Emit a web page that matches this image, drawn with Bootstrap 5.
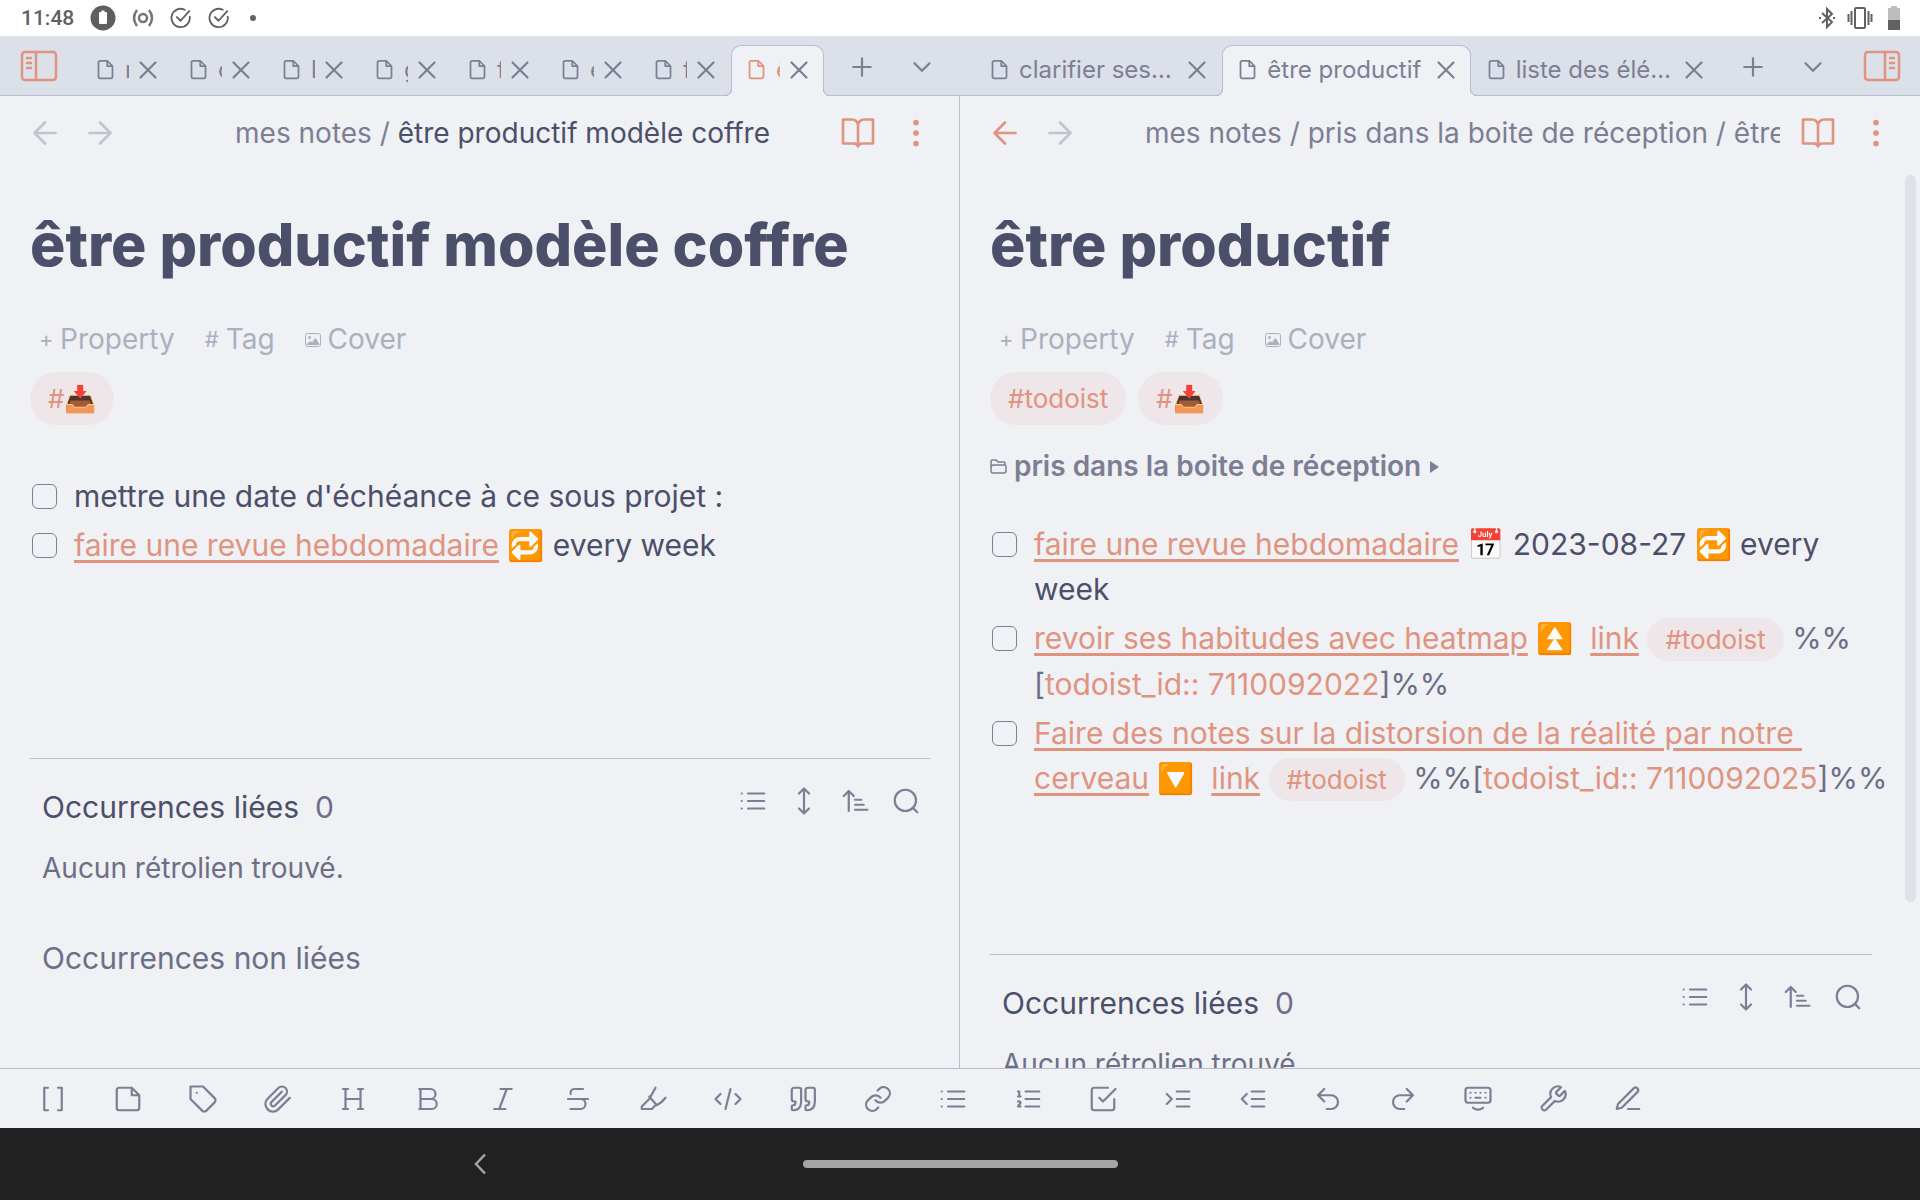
<!DOCTYPE html>
<html lang="fr">
<head>
<meta charset="utf-8">
<meta name="viewport" content="width=device-width, initial-scale=1">
<title>être productif modèle coffre</title>
<link href="https://cdn.jsdelivr.net/npm/bootstrap@5.3.0/dist/css/bootstrap.min.css" rel="stylesheet">
<style>
:root{--base:#eff1f5;--mantle:#dce0e8;--ink:#4c4f69;--muted:#6c6f85;--faint:#7c7f93;--pale:#acb0be;--line:#b9bdd0;--accent:#e09480;--pill:#eee6e8}
body{font-family:Inter,"Noto Sans",sans-serif;background:var(--base);color:var(--ink);font-size:30px;line-height:45px}
svg{display:block;flex:none}
.ico{fill:none;stroke:currentColor;stroke-width:1.75;stroke-linecap:round;stroke-linejoin:round;width:30px;height:30px}
.ico-sm{width:21px;height:21px;stroke-width:2}
.ico-lg{width:36px;height:36px}
.ico-side{width:38px;height:32px;stroke-width:2.5}
.ico-check{width:22px;height:24px;stroke-width:2}
.plain{border:0;background:none;padding:0;color:inherit;display:flex;align-items:center;justify-content:center;flex:none}
.status{height:36px;background:#fff;color:#616161;font:500 21px/36px Roboto,sans-serif;padding:0 20px 0 21px}
.status-left{gap:16px}
.status-right{gap:11px}
.tabbar{height:60px;background:var(--mantle);border-bottom:1px solid var(--line);color:var(--faint)}
.side-btn{width:78px;color:var(--accent);height:36px;margin-right:2px}
.side-btn.end{width:77px;margin-right:0}
.tab-group{min-width:0;flex:0 0 50%}
.tab-group+.tab-group{padding-left:14px}
.strip{min-width:0;flex:1 1 0}
.note-tab{height:51px;padding:0 10px 2px 15px;flex:1 1 0;min-width:0;font-size:24px;margin-bottom:-1px;position:relative}
.note-tab .tab-link{color:inherit;text-decoration:none;gap:9px;min-width:0;flex:1 1 0}
.note-tab .tab-name{overflow:hidden;white-space:nowrap;text-overflow:ellipsis;line-height:36px;min-width:0}
.strip.clip .tab-name{text-overflow:clip}
.note-tab .plain{margin-left:4px;color:var(--faint)}
.note-tab.on{background:var(--base);border:1px solid var(--line);border-bottom:0;border-radius:10px 10px 0 0;padding:0 9px 3px 14px;z-index:1}
.note-tab.on::before,.note-tab.on::after{content:"";position:absolute;bottom:0;width:7px;height:7px;border:1px solid var(--line);border-top:0}
.note-tab.on::before{left:-7px;border-left:0;border-bottom-right-radius:7px;box-shadow:3px 3px 0 var(--base);clip-path:inset(0 -1px 0 0)}
.note-tab.on::after{right:-7px;border-right:0;border-bottom-left-radius:7px;box-shadow:-3px 3px 0 var(--base);clip-path:inset(0 0 0 -1px)}
.note-tab .tab-link.hot,.hot{color:var(--accent)}
.bar-btn{width:60px;height:59px;padding-top:3px}
.pane{min-width:0;flex:1 1 0}
.pane+.pane{border-left:1px solid var(--line);margin-left:-1px}
.view-head{height:74px;padding:0 17px 0 17px;font-size:28px}
.view-head .nav-btn{width:55px;height:60px;color:#c1c3d0}
.view-head .nav-btn.live,.view-head .act{color:var(--accent)}
.view-head .act{width:60px;height:60px}
.view-head .act.last{width:55px}
.crumbs{margin:0 8px 0 58px;overflow:hidden;white-space:nowrap;color:var(--faint)}
.crumbs a{color:inherit;text-decoration:none}
.crumbs .here{color:var(--ink)}
.note{padding:39px 30px 0;overflow:hidden}
.with-bar .note{padding-right:48px}
.note h1{font-size:59px;font-weight:800;line-height:72px;margin:0 0 36px}
.meta-row{color:var(--pale);font-size:28px;padding-left:9px;gap:30px}
.meta-row .plain{gap:7px}
.meta-row .sign{font-size:22px;width:14px}
.tag-row{margin-top:10px;gap:12px}
.tag{color:var(--accent);background:var(--pill);text-decoration:none;font-size:26px;border-radius:27px;padding:4px 18px}
.tag-in{padding:6px 18px;border-radius:22px}
.folder{font-size:28px;font-weight:600;color:var(--faint);margin-top:19px;gap:7px}
.tasks{margin-top:47px;margin-bottom:188px}
.with-bar .tasks{margin-top:31px;margin-right:-20px;margin-bottom:150px}
.task{padding:2px 0;gap:17px}
.task input{appearance:none;width:25px;height:25px;border:1px solid var(--faint);border-radius:6px;margin:10px 0 0 2px;flex:none}
.task label{white-space:break-spaces}
.task label a:not(.tag){color:var(--accent);text-decoration:underline;text-decoration-thickness:3px;text-underline-offset:4px}
.dim{color:var(--muted)}
.refs{border-top:1px solid var(--line);padding:26px 9px 0 12px}
.refs h2,.refs h3{font-size:30px;font-weight:400;line-height:45px;margin:0}
.refs .tools{gap:21px;color:var(--faint);margin-top:-14px}
.refs p{font-size:28px;margin:16px 0 45px}
.thumb{position:absolute;right:4px;top:79px;width:11px;height:727px;border-radius:6px;background:#dfe0ea}
.dock{height:60px;border-top:1px solid var(--line);color:var(--faint);padding:0 15px}
.dock .plain{width:75px}
.sysnav{height:72px;background:#212121;color:#a4a4a4}
.home{width:315px;height:8px;border-radius:4px;background:#a4a4a4}
.back{width:60px;height:60px;left:450px;top:6px;position:absolute}
</style>
</head>
<body class="vh-100 d-flex flex-column overflow-hidden">
<svg width="0" height="0" class="position-absolute" aria-hidden="true">
<symbol id="file" viewBox="0 0 24 24"><path d="M14 2H6a2 2 0 0 0-2 2v16a2 2 0 0 0 2 2h12a2 2 0 0 0 2-2V8zM14 2v6h6"/></symbol>
<symbol id="x" viewBox="0 0 24 24"><path d="M6 6l12 12M18 6L6 18"/></symbol>
<symbol id="plus" viewBox="0 0 24 24"><path d="M12 5v14M5 12h14"/></symbol>
<symbol id="down" viewBox="0 0 24 24"><path d="M6 9l6 6 6-6"/></symbol>
<symbol id="left" viewBox="0 0 24 24"><path d="M19 12H5M12 19l-7-7 7-7"/></symbol>
<symbol id="right" viewBox="0 0 24 24"><path d="M5 12h14M12 5l7 7-7 7"/></symbol>
<symbol id="book" viewBox="0 0 24 24"><path d="M2 3h6a4 4 0 0 1 4 4v14a3 3 0 0 0-3-2H2zM22 3h-6a4 4 0 0 0-4 4v14a3 3 0 0 1 3-2h7z"/></symbol>
<symbol id="dots" viewBox="0 0 24 24"><g fill="currentColor"><circle cx="12" cy="5" r="1"/><circle cx="12" cy="12" r="1"/><circle cx="12" cy="19" r="1"/></g></symbol>
<symbol id="list" viewBox="0 0 24 24"><path d="M8 6h13M8 12h13M8 18h13M3 6h.01M3 12h.01M3 18h.01"/></symbol>
<symbol id="updown" viewBox="0 0 24 24"><path d="M12 2v20M8 6l4-4 4 4M8 18l4 4 4-4"/></symbol>
<symbol id="sort" viewBox="0 0 24 24"><path d="M3 8l4-4 4 4M7 4v16M12 11h5M12 15h7M12 19h10"/></symbol>
<symbol id="search" viewBox="0 0 24 24"><circle cx="11.5" cy="11.5" r="8.5"/><path d="M21 21l-3.5-3.5"/></symbol>
<symbol id="side-left" viewBox="0 0 38 32"><rect x="2" y="2" width="34" height="28" rx="3"/><path d="M16 2v28M7 8h4M7 13h4M7 18h4"/></symbol>
<symbol id="side-right" viewBox="0 0 38 32"><rect x="2" y="2" width="34" height="28" rx="3"/><path d="M22 2v28M27 8h4M27 13h4M27 18h4"/></symbol>
<symbol id="check" viewBox="0 0 24 24"><path d="M21.500 10.500A10 10 0 1 1 16 3M7.500 11l4 4L21 4.500"/></symbol>
<symbol id="cover" viewBox="0 0 16 14"><rect x=".5" y=".5" width="15" height="13" rx="2"/><circle cx="4.500" cy="4.500" r="1" fill="currentColor"/><path d="M2 11.500l3-3 2 1.500 3.500-4.500 3.500 6z" fill="currentColor"/></symbol>
</svg>

<header class="status d-flex align-items-center justify-content-between">
  <div class="status-left d-flex align-items-center">
    <span>11:48</span>
    <svg width="26" height="26" viewBox="0 0 26 26"><circle cx="13" cy="13" r="12.500" fill="#5f5f5f"/><path d="M9 8q0-1 1-1h1.500V5.500h3V7H16q1 0 1 1v10q0 1-1 1h-6q-1 0-1-1z" fill="#fff"/></svg>
    <svg width="22" height="24" viewBox="1 0 22 24" fill="none" stroke="#757575" stroke-width="2.500"><circle cx="12" cy="12" r="4"/><path d="M6 4q-6 8 0 16M18 4q6 8 0 16"/></svg>
    <svg class="ico ico-check"><use href="#check"/></svg>
    <svg class="ico ico-check"><use href="#check"/></svg>
    <svg width="14" height="14"><circle cx="7" cy="7" r="3" fill="#616161"/></svg>
  </div>
  <div class="status-right d-flex align-items-center">
    <svg width="18" height="24" viewBox="0 0 18 24" fill="none" stroke="#616161" stroke-width="2"><path d="M4 7l10 9-5 5V3l5 5-10 9"/><path d="M1 12h2M15 12h2"/></svg>
    <svg width="26" height="24" viewBox="0 0 26 24" fill="none" stroke="#616161" stroke-width="2"><rect x="8" y="2" width="10" height="20" rx="1"/><path d="M4.500 5v14M21.500 5v14M1.500 8v8M24.500 8v8"/></svg>
    <svg width="16" height="24" viewBox="-4 0 16 24"><path d="M0 2h3V0h6v2h3v12H0z" fill="#bdbdbd"/><path d="M0 14h12v10H0z" fill="#616161"/></svg>
  </div>
</header>

<nav class="tabbar d-flex">
  <div class="tab-group d-flex align-items-end">
    <button class="plain side-btn align-self-center" aria-label="Barre latérale gauche"><svg class="ico ico-side"><use href="#side-left"/></svg></button>
    <div class="d-flex strip clip" id="smallTabs"></div>
    <button class="plain bar-btn ms-2" aria-label="Nouvel onglet"><svg class="ico"><use href="#plus"/></svg></button>
    <button class="plain bar-btn me-2" aria-label="Liste des onglets"><svg class="ico"><use href="#down"/></svg></button>
  </div>
  <div class="tab-group d-flex align-items-end">
    <div class="d-flex strip">
      <div class="note-tab d-flex align-items-center"><a href="#" class="tab-link d-flex align-items-center"><svg class="ico ico-sm"><use href="#file"/></svg><span class="tab-name">clarifier ses notes</span></a><button class="plain" aria-label="Fermer"><svg class="ico"><use href="#x"/></svg></button></div>
      <div class="note-tab on d-flex align-items-center"><a href="#" class="tab-link d-flex align-items-center"><svg class="ico ico-sm"><use href="#file"/></svg><span class="tab-name">être productif</span></a><button class="plain" aria-label="Fermer"><svg class="ico"><use href="#x"/></svg></button></div>
      <div class="note-tab d-flex align-items-center"><a href="#" class="tab-link d-flex align-items-center"><svg class="ico ico-sm"><use href="#file"/></svg><span class="tab-name">liste des éléments</span></a><button class="plain" aria-label="Fermer"><svg class="ico"><use href="#x"/></svg></button></div>
    </div>
    <button class="plain bar-btn ms-1" aria-label="Nouvel onglet"><svg class="ico"><use href="#plus"/></svg></button>
    <button class="plain bar-btn" aria-label="Liste des onglets"><svg class="ico"><use href="#down"/></svg></button>
    <button class="plain side-btn end align-self-center" aria-label="Barre latérale droite"><svg class="ico ico-side"><use href="#side-right"/></svg></button>
  </div>
</nav>

<main class="d-flex flex-grow-1 overflow-hidden">
  <section class="pane d-flex flex-column">
    <div class="view-head d-flex align-items-center flex-shrink-0">
      <button class="plain nav-btn" aria-label="Précédent"><svg class="ico ico-lg"><use href="#left"/></svg></button>
      <button class="plain nav-btn" aria-label="Suivant"><svg class="ico ico-lg"><use href="#right"/></svg></button>
      <div class="crumbs flex-grow-1 text-center"><a href="#">mes notes</a> / <span class="here">être productif modèle coffre</span></div>
      <button class="plain act" aria-label="Mode lecture"><svg class="ico ico-lg"><use href="#book"/></svg></button>
      <button class="plain act last" aria-label="Plus d'options"><svg class="ico ico-lg"><use href="#dots"/></svg></button>
    </div>
    <article class="note">
      <h1>être productif modèle coffre</h1>
      <div class="meta-row d-flex">
        <button class="plain"><span class="sign">+</span>Property</button>
        <button class="plain"><span class="sign">#</span>Tag</button>
        <button class="plain"><svg width="16" height="14" fill="none" stroke="currentColor"><use href="#cover"/></svg>Cover</button>
      </div>
      <div class="tag-row d-flex"><a href="#" class="tag">#📥</a></div>
      <ul class="tasks list-unstyled">
        <li class="task d-flex align-items-start"><input type="checkbox" id="a1"><label for="a1">mettre une date d'échéance à ce sous projet :</label></li>
        <li class="task d-flex align-items-start"><input type="checkbox" id="a2"><label for="a2"><a href="#">faire une revue hebdomadaire</a> 🔁 every week</label></li>
      </ul>
      <section class="refs">
        <div class="d-flex align-items-center">
          <h2>Occurrences liées</h2><span class="dim ms-3">0</span>
          <div class="tools d-flex ms-auto">
            <button class="plain" aria-label="Réduire les résultats"><svg class="ico"><use href="#list"/></svg></button>
            <button class="plain" aria-label="Afficher plus de contexte"><svg class="ico"><use href="#updown"/></svg></button>
            <button class="plain" aria-label="Trier"><svg class="ico"><use href="#sort"/></svg></button>
            <button class="plain" aria-label="Rechercher"><svg class="ico"><use href="#search"/></svg></button>
          </div>
        </div>
        <p class="dim">Aucun rétrolien trouvé.</p>
        <h3 class="dim">Occurrences non liées</h3>
      </section>
    </article>
  </section>

  <section class="pane with-bar d-flex flex-column position-relative">
    <div class="view-head d-flex align-items-center flex-shrink-0">
      <button class="plain nav-btn live" aria-label="Précédent"><svg class="ico ico-lg"><use href="#left"/></svg></button>
      <button class="plain nav-btn" aria-label="Suivant"><svg class="ico ico-lg"><use href="#right"/></svg></button>
      <div class="crumbs flex-grow-1"><a href="#">mes notes</a> / <a href="#">pris dans la boite de réception</a> / <span>être productif</span></div>
      <button class="plain act" aria-label="Mode lecture"><svg class="ico ico-lg"><use href="#book"/></svg></button>
      <button class="plain act last" aria-label="Plus d'options"><svg class="ico ico-lg"><use href="#dots"/></svg></button>
    </div>
    <article class="note">
      <h1>être productif</h1>
      <div class="meta-row d-flex">
        <button class="plain"><span class="sign">+</span>Property</button>
        <button class="plain"><span class="sign">#</span>Tag</button>
        <button class="plain"><svg width="16" height="14" fill="none" stroke="currentColor"><use href="#cover"/></svg>Cover</button>
      </div>
      <div class="tag-row d-flex"><a href="#" class="tag">#todoist</a><a href="#" class="tag">#📥</a></div>
      <div class="folder d-flex align-items-center">
        <svg width="17" height="15" viewBox="0 0 17 15" fill="none" stroke="currentColor" stroke-width="1.500"><path d="M1 12V2.500Q1 1 2.500 1H6l2 2h5.500Q15 3 15 4.500V6M1 12q0 2 2 2h11q2 0 2-2V7.500Q16 6 14.500 6h-11Q1 6 1 8.500"/></svg>
        <span>pris dans la boite de réception</span>
        <svg width="12" height="12" viewBox="0 0 12 12"><path d="M2 0l9 6-9 6z" fill="currentColor"/></svg>
      </div>
      <ul class="tasks list-unstyled">
        <li class="task d-flex align-items-start"><input type="checkbox" id="b1"><label for="b1"><a href="#">faire une revue hebdomadaire</a> 📅 2023-08-27 🔁 every week</label></li>
        <li class="task d-flex align-items-start"><input type="checkbox" id="b2"><label for="b2"><a href="#">revoir ses habitudes avec heatmap</a> ⏫  <a href="#">link</a> <a href="#" class="tag tag-in">#todoist</a> <span class="dim">%%<wbr>[<span class="hot">todoist_id:: 7110092022</span>]%%</span></label></li>
        <li class="task d-flex align-items-start"><input type="checkbox" id="b3"><label for="b3"><a href="#">Faire des notes sur la distorsion de la réalité par notre cerveau</a> 🔽  <a href="#">link</a> <a href="#" class="tag tag-in">#todoist</a> <span class="dim">%%[<span class="hot">todoist_id:: 7110092025</span>]%%</span></label></li>
      </ul>
      <section class="refs">
        <div class="d-flex align-items-center">
          <h2>Occurrences liées</h2><span class="dim ms-3">0</span>
          <div class="tools d-flex ms-auto">
            <button class="plain" aria-label="Réduire les résultats"><svg class="ico"><use href="#list"/></svg></button>
            <button class="plain" aria-label="Afficher plus de contexte"><svg class="ico"><use href="#updown"/></svg></button>
            <button class="plain" aria-label="Trier"><svg class="ico"><use href="#sort"/></svg></button>
            <button class="plain" aria-label="Rechercher"><svg class="ico"><use href="#search"/></svg></button>
          </div>
        </div>
        <p class="dim">Aucun rétrolien trouvé.</p>
      </section>
    </article>
    <div class="thumb"></div>
  </section>
</main>

<div class="dock d-flex align-items-center flex-shrink-0" id="dock" role="toolbar"></div>

<footer class="sysnav d-flex align-items-center justify-content-center flex-shrink-0 position-relative">
  <button class="plain back" aria-label="Retour"><svg width="14" height="22" viewBox="0 0 14 22" fill="none" stroke="currentColor" stroke-width="2.500"><path d="M12 1.500L3 11l9 9.500"/></svg></button>
  <div class="home"></div>
</footer>

<script>
const names = ['r', 'c', 'l', 'g', 'f', 'e', 'f', 'être productif modèle coffre'];
document.getElementById('smallTabs').innerHTML = names.map((n, i) => {
  const on = i === names.length - 1;
  return `<div class="note-tab ${on ? 'on' : ''} d-flex align-items-center"><a href="#" class="tab-link d-flex align-items-center ${on ? 'hot' : ''}"><svg class="ico ico-sm"><use href="#file"/></svg><span class="tab-name">${n}</span></a><button class="plain" aria-label="Fermer"><svg class="ico"><use href="#x"/></svg></button></div>`;
}).join('');

const tools = [
  ['Lien interne', 'M16 3h3v18h-3M8 21H5V3h3'],
  ['Fichier', 'M15 3H5a2 2 0 0 0-2 2v14a2 2 0 0 0 2 2h14a2 2 0 0 0 2-2V9zM15 3v6h6'],
  ['Étiquette', 'M12 2H2v10l9.300 9.300c.9.900 2.500.900 3.400 0l6.600-6.600c.9-.9.900-2.500 0-3.400zM7 7h.01'],
  ['Pièce jointe', 'M21.400 11.100l-9.200 9.200a6 6 0 0 1-8.500-8.500l8.600-8.600a4 4 0 0 1 5.700 5.700l-8.600 8.500a2 2 0 0 1-2.800-2.800l8.500-8.500'],
  ['Titre', 'M6 4v16M18 4v16M6 12h12M4 4h4M4 20h4M16 4h4M16 20h4'],
  ['Gras', 'M6 4h8a4 4 0 0 1 0 8H6zM6 12h9a4 4 0 0 1 0 8H6zM5 4h2M5 20h2'],
  ['Italique', 'M19 4h-9M14 20H5M15 4L9 20'],
  ['Barré', 'M16 4H9a3 3 0 0 0-2.800 4M14 12a4 4 0 0 1 0 8H6M4 12h16'],
  ['Surligner', 'M14 3L9 12l-6 6v2h8l3-3M9 10l6 7q4-2 7-6'],
  ['Code', 'M18 16l4-4-4-4M6 8l-4 4 4 4M14 4l-4 16'],
  ['Citation', 'M5 3h4a1.500 1.500 0 0 1 1.500 1.500V14q0 7-6.500 7-1 0-1-1v-2q0-1 1-1 2 0 2-2.500V14H5q-2 0-2-2V5q0-2 2-2zM16 3h4a1.500 1.500 0 0 1 1.500 1.500V14q0 7-6.500 7-1 0-1-1v-2q0-1 1-1 2 0 2-2.500V14h-1q-2 0-2-2V5q0-2 2-2z'],
  ['Lien', 'M10 13a5 5 0 0 0 7.500.5l3-3a5 5 0 0 0-7-7l-1.800 1.700M14 11a5 5 0 0 0-7.500-.5l-3 3a5 5 0 0 0 7 7l1.700-1.700'],
  ['Liste à puces', 'M8 6h13M8 12h13M8 18h13M3 6h.01M3 12h.01M3 18h.01'],
  ['Liste numérotée', 'M10 6h11M10 12h11M10 18h11M4 6h1v4M4 10h2M6 18H4c0-1 2-2 2-3s-1-1.500-2-1'],
  ['Liste de tâches', 'M9 11l3 3L22 4M21 12v7a2 2 0 0 1-2 2H5a2 2 0 0 1-2-2V5a2 2 0 0 1 2-2h11'],
  ['Indenter', 'M3 8l4 4-4 4M21 12H11M21 6H11M21 18H11'],
  ['Désindenter', 'M7 8l-4 4 4 4M21 12H11M21 6H11M21 18H11'],
  ['Annuler', 'M9 14L4 9l5-5M4 9h10.500a5.500 5.500 0 0 1 0 11H11'],
  ['Rétablir', 'M15 14l5-5-5-5M20 9H9.500a5.500 5.500 0 0 0 0 11H13'],
  ['Clavier', 'M4 3h16a2 2 0 0 1 2 2v8a2 2 0 0 1-2 2H4a2 2 0 0 1-2-2V5a2 2 0 0 1 2-2zM6 7h.01M10 7h.01M14 7h.01M18 7h.01M6 11h.01M10 11h4M18 11h.01M8 19q4 3 8 0'],
  ['Réglages', 'M14.700 6.300a1 1 0 0 0 0 1.400l1.600 1.600a1 1 0 0 0 1.400 0l3.800-3.800a6 6 0 0 1-8 8l-6.900 6.900a2.100 2.100 0 0 1-3-3l6.900-6.900a6 6 0 0 1 8-8z'],
  ['Modifier', 'M12 20h9M16.500 3.500a2.100 2.100 0 0 1 3 3L7 19l-4 1 1-4z']
];
document.getElementById('dock').innerHTML = tools.map(([label, d]) =>
  `<button class="plain" aria-label="${label}"><svg class="ico" viewBox="0 0 24 24"><path d="${d}"/></svg></button>`).join('');
</script>
<script src="https://cdn.jsdelivr.net/npm/bootstrap@5.3.0/dist/js/bootstrap.bundle.min.js"></script>
</body>
</html>
